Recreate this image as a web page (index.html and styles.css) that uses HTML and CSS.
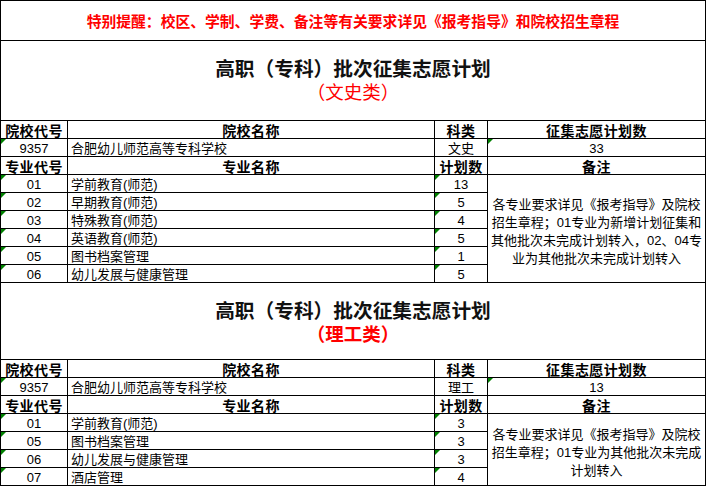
FILE: index.html
```html
<!DOCTYPE html>
<html lang="zh-CN">
<head>
<meta charset="utf-8">
<title>高职（专科）批次征集志愿计划</title>
<link rel="stylesheet" href="styles.css">
</head>
<body>
<div class="sheet">
  <div class="notice">特别提醒：校区、学制、学费、备注等有关要求详见《报考指导》和院校招生章程</div>

  <section class="plan">
    <div class="title title-a">
      <div class="main">高职（专科）批次征集志愿计划</div>
      <div class="sub">（文史类）</div>
    </div>
    <div class="grid">
      <div class="c h">院校代号</div>
      <div class="c h">院校名称</div>
      <div class="c h">科类</div>
      <div class="c h">征集志愿计划数</div>

      <div class="c t">9357</div>
      <div class="c l">合肥幼儿师范高等专科学校</div>
      <div class="c">文史</div>
      <div class="c t">33</div>

      <div class="c h">专业代号</div>
      <div class="c h">专业名称</div>
      <div class="c h">计划数</div>
      <div class="c h">备注</div>

      <div class="c t">01</div>
      <div class="c l">学前教育(师范)</div>
      <div class="c t">13</div>
      <div class="c note span6">各专业要求详见《报考指导》及院校<br>招生章程；01专业为新增计划征集和<br>其他批次未完成计划转入，02、04专<br>业为其他批次未完成计划转入</div>

      <div class="c t">02</div>
      <div class="c l">早期教育(师范)</div>
      <div class="c t">5</div>

      <div class="c t">03</div>
      <div class="c l">特殊教育(师范)</div>
      <div class="c t">4</div>

      <div class="c t">04</div>
      <div class="c l">英语教育(师范)</div>
      <div class="c t">5</div>

      <div class="c t">05</div>
      <div class="c l">图书档案管理</div>
      <div class="c t">1</div>

      <div class="c t">06</div>
      <div class="c l">幼儿发展与健康管理</div>
      <div class="c t">5</div>
    </div>
  </section>

  <section class="plan">
    <div class="title title-b">
      <div class="main">高职（专科）批次征集志愿计划</div>
      <div class="sub">（理工类）</div>
    </div>
    <div class="grid">
      <div class="c h">院校代号</div>
      <div class="c h">院校名称</div>
      <div class="c h">科类</div>
      <div class="c h">征集志愿计划数</div>

      <div class="c t">9357</div>
      <div class="c l">合肥幼儿师范高等专科学校</div>
      <div class="c">理工</div>
      <div class="c t">13</div>

      <div class="c h">专业代号</div>
      <div class="c h">专业名称</div>
      <div class="c h">计划数</div>
      <div class="c h">备注</div>

      <div class="c t">01</div>
      <div class="c l">学前教育(师范)</div>
      <div class="c t">3</div>
      <div class="c note span4">各专业要求详见《报考指导》及院校<br>招生章程；01专业为其他批次未完成<br>计划转入</div>

      <div class="c t">05</div>
      <div class="c l">图书档案管理</div>
      <div class="c t">3</div>

      <div class="c t">06</div>
      <div class="c l">幼儿发展与健康管理</div>
      <div class="c t">3</div>

      <div class="c t">07</div>
      <div class="c l">酒店管理</div>
      <div class="c t">4</div>
    </div>
  </section>
</div>
</body>
</html>
```

FILE: styles.css
```css
* {
  box-sizing: border-box;
}

html, body {
  margin: 0;
  padding: 0;
  background: #ffffff;
}

body {
  font-family: "Liberation Sans", "Noto Sans CJK SC", sans-serif;
  color: #000000;
}

.sheet {
  width: 706px;
  border-left: 1px solid #000;
  border-top: 1px solid #000;
}

.notice {
  height: 40px;
  border-right: 1px solid #000;
  border-bottom: 1px solid #000;
  display: flex;
  align-items: center;
  justify-content: center;
  color: #ff0000;
  font-size: 14.8px;
  font-weight: 700;
  line-height: 18px;
  padding-top: 3px;
}

.title {
  border-right: 1px solid #000;
  border-bottom: 1px solid #000;
  text-align: center;
  padding-top: 16px;
}

.title-a {
  height: 80px;
}

.title-b {
  height: 77px;
}

.title .main {
  font-size: 19.7px;
  font-weight: 700;
  line-height: 24px;
  color: #111;
}

.title .sub {
  font-size: 18.5px;
  line-height: 24px;
  color: #ff0000;
  font-weight: 400;
}

.title-b .sub {
  font-weight: 700;
}

.grid {
  display: grid;
  grid-template-columns: 67px 367px 53px 218px;
  grid-auto-rows: 18px;
}

.c {
  position: relative;
  border-right: 1px solid #000;
  border-bottom: 1px solid #000;
  display: flex;
  align-items: center;
  justify-content: center;
  font-size: 13px;
  line-height: 16px;
  white-space: nowrap;
  padding-top: 2px;
}

.c.h {
  font-weight: 700;
  font-size: 14px;
  letter-spacing: 0.4px;
}

.c.l {
  justify-content: flex-start;
  padding-left: 3px;
}

.c.t::before {
  content: "";
  position: absolute;
  left: 0;
  top: 0;
  width: 0;
  height: 0;
  border-top: 5px solid #008000;
  border-right: 5px solid transparent;
}

.c.note {
  white-space: normal;
  text-align: center;
  line-height: 18px;
  padding-top: 6px;
}

.span6 {
  grid-row: span 6;
}

.span4 {
  grid-row: span 4;
}
```
